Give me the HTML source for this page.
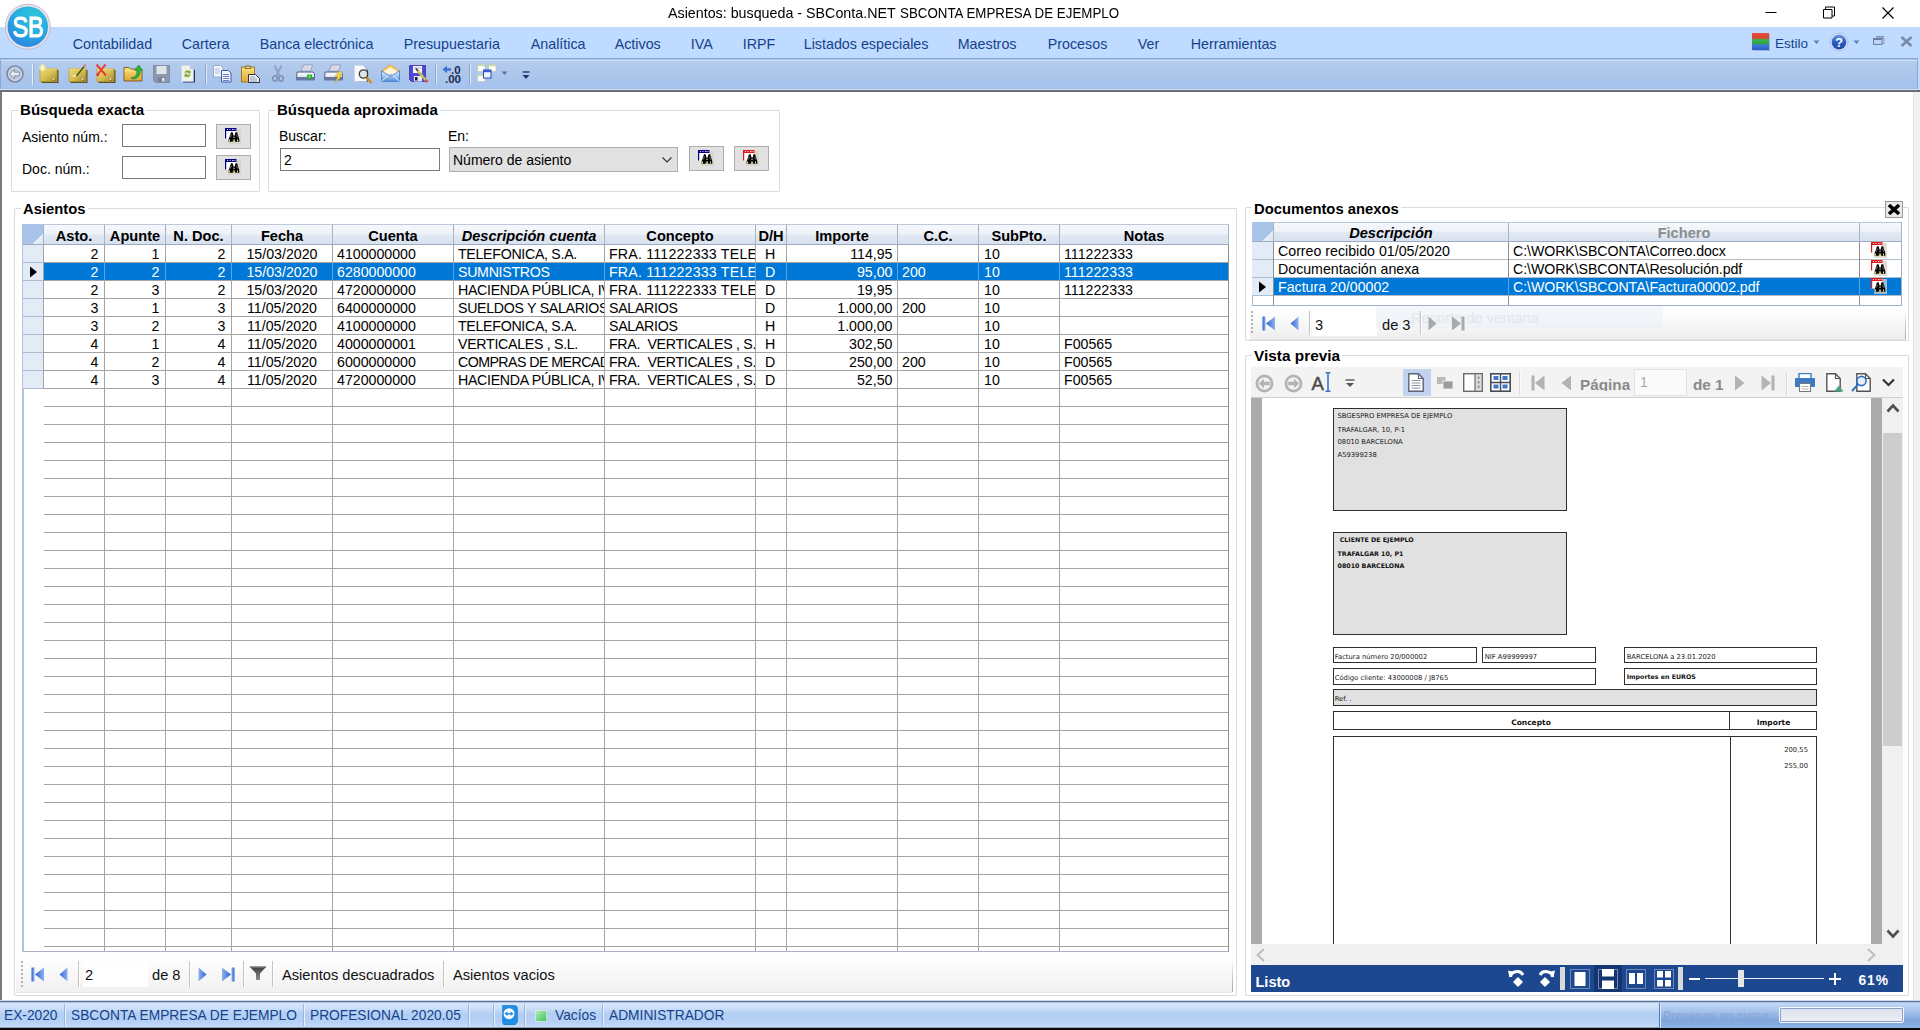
<!DOCTYPE html><html lang="es"><head><meta charset="utf-8"><title>Asientos: busqueda - SBConta.NET</title><style>
*{box-sizing:border-box;margin:0;padding:0}
html,body{width:1920px;height:1030px;overflow:hidden;background:#fff}
body{position:relative;font-family:"Liberation Sans",sans-serif;font-size:14px;color:#000}
.a{position:absolute;white-space:nowrap}
.t{position:absolute;white-space:nowrap;line-height:18px;height:18px}
.b{font-weight:bold}
.mn{color:#15428b;font-size:14.300px;top:35px}
.gb{position:absolute;border:1px solid #dcdcdc;border-radius:1px}
.gt{position:absolute;font-weight:bold;font-size:15px;line-height:18px;background:#fff;padding:0 2px;white-space:nowrap}
.inp{position:absolute;background:#fff;border:1px solid #7a7a7a}
.btn{position:absolute;background:#e1e1e1;border:1px solid #adadad}
.hd{position:absolute;background:linear-gradient(#f5f8fc 0%,#eef2f9 46%,#e1e8f3 54%,#d8e1ef 100%);border-right:1px solid #a7b3c9;border-bottom:1px solid #a0abc0;border-top:1px solid #bcc7da;font-weight:bold;font-size:14.6px;text-align:center;line-height:20px;white-space:nowrap;overflow:hidden}
.c{position:absolute;white-space:nowrap;overflow:hidden;font-size:14.2px;line-height:18px;height:18px;padding:0 4px}
.r{text-align:right;padding-right:5.500px}
.sel{color:#fff}
.st{position:absolute;color:#15428b;font-size:13.75px;line-height:18px;top:1007px;white-space:nowrap}
.nv{position:absolute;font-size:14.67px;line-height:20px;white-space:nowrap;color:#111}
.pv{position:absolute;font-family:"DejaVu Sans","Liberation Sans",sans-serif;font-size:6.8px;line-height:9px;white-space:nowrap;color:#222}
.pv.b{font-size:6.3px;color:#111}
</style></head><body>
<div class="a" style="left:0;top:0;width:1920px;height:27px;background:#fff"></div>
<div class="a" style="left:668px;top:3px;height:20px;font-size:15px;line-height:20px;"><span style="display:inline-block;transform-origin:0 50%;transform:scaleX(.9515)">Asientos: busqueda - SBConta.NET</span></div>
<div class="a" style="left:900px;top:3px;height:20px;font-size:15px;line-height:20px;"><span style="display:inline-block;transform-origin:0 50%;transform:scaleX(.889)">SBCONTA EMPRESA DE EJEMPLO</span></div>
<svg class="a" style="left:1760px;top:0" width="160" height="27" viewBox="0 0 160 27"><g fill="none" stroke="#000" stroke-width="1"><path d="M5.5 12.5h11"/><path d="M63.5 9.5h8.500v8.500h-8.500z"/><path d="M65.5 9.5v-2.500h9v9h-2.500"/><path d="M122.5 7.500l11 11M133.500 7.500l-11 11" stroke-width="1.2"/></g></svg>
<div class="a" style="left:0;top:27px;width:1920px;height:32px;background:#bfdbff"></div>
<div class="t mn" style="left:72.7px">Contabilidad</div>
<div class="t mn" style="left:181.7px">Cartera</div>
<div class="t mn" style="left:259.7px">Banca electrónica</div>
<div class="t mn" style="left:403.7px">Presupuestaria</div>
<div class="t mn" style="left:530.7px">Analítica</div>
<div class="t mn" style="left:614.7px">Activos</div>
<div class="t mn" style="left:690.7px">IVA</div>
<div class="t mn" style="left:742.7px">IRPF</div>
<div class="t mn" style="left:803.7px">Listados especiales</div>
<div class="t mn" style="left:957.7px">Maestros</div>
<div class="t mn" style="left:1047.7px">Procesos</div>
<div class="t mn" style="left:1137.7px">Ver</div>
<div class="t mn" style="left:1190.7px">Herramientas</div>
<div class="t mn" style="left:1775px;top:35px;font-size:13.500px">Estilo</div>
<div class="a" style="left:0;top:58px;width:1920px;height:34px;background:linear-gradient(#bfdbff 0,#86a4d1 .4px,#86a4d1 1.300px,#cfe0f8 1.700px,#cfe0f8 2.500px,#b4cced 2.900px,#adc6ea 16px,#a4c3ee 30px,#8eaad4 30.300px,#d5e3f8 30.900px,#d5e3f8 32.100px,#6b6e78 32.500px,#6b6e78 33.600px,#e6e6e8 34px)"></div>
<div class="a" style="left:1918px;top:58px;width:2px;height:32px;background:#bfdbff"></div>
<div class="a" style="left:1917px;top:60px;width:1px;height:29px;background:#8eaad4"></div><div class="a" style="left:0;top:60px;width:1px;height:29px;background:#8eaad4"></div>
<div class="a" style="left:0;top:92px;width:1920px;height:909px;background:#fff"></div>
<div class="a" style="left:0;top:92px;width:2px;height:909px;background:#787a80"></div>
<div class="a" style="left:1913px;top:92px;width:7px;height:909px;background:#f0f0f0;border-left:1px solid #e2e2e2"></div>
<div class="gb" style="left:11px;top:110px;width:249px;height:82px"></div>
<div class="gt" style="left:18px;top:101px;font-size:15.100px">Búsqueda exacta</div>
<div class="t" style="left:22px;top:128px">Asiento núm.:</div>
<div class="t" style="left:22px;top:160px">Doc. núm.:</div>
<div class="inp" style="left:122px;top:124px;width:84px;height:23px"></div>
<div class="inp" style="left:122px;top:156px;width:84px;height:23px"></div>
<div class="btn" style="left:216px;top:124px;width:35px;height:25px"></div>
<div class="btn" style="left:216px;top:155px;width:35px;height:25px"></div>
<div class="gb" style="left:268px;top:110px;width:512px;height:82px"></div>
<div class="gt" style="left:275px;top:101px">Búsqueda aproximada</div>
<div class="t" style="left:279px;top:127px">Buscar:</div>
<div class="t" style="left:448px;top:127px">En:</div>
<div class="inp" style="left:280px;top:148px;width:160px;height:23px"></div>
<div class="t" style="left:284px;top:151px">2</div>
<div class="btn" style="left:449px;top:147px;width:229px;height:25px"></div>
<div class="t" style="left:453px;top:151px">Número de asiento</div>
<svg class="a" style="left:660px;top:155px" width="14" height="10"><path d="M2.500 2.500l4.500 4.500l4.500-4.500" fill="none" stroke="#333" stroke-width="1.2"/></svg>
<div class="btn" style="left:689px;top:146px;width:35px;height:25px"></div>
<div class="btn" style="left:734px;top:146px;width:35px;height:25px"></div>
<div class="gb" style="left:14px;top:208px;width:1223px;height:788px"></div>
<div class="gt" style="left:21px;top:200px;font-size:14.800px">Asientos</div>
<div class="a" style="left:23px;top:224px;width:1206px;height:728px;background:#fff;border-right:1px solid #8f8f8f;border-bottom:1px solid #aab2c2;overflow:hidden">
<div class="a" style="left:0;top:21px;width:100%;height:707px;background:repeating-linear-gradient(#fff 0,#fff 17px,#a4a4a4 17px,#a4a4a4 18px)"></div>
<div class="a" style="left:0;top:21px;width:21px;height:144px;background:repeating-linear-gradient(#e3ebf7 0,#e3ebf7 17px,#aebdd6 17px,#aebdd6 18px);border-right:1px solid #aebdd6"></div>
<div class="a" style="left:20px;top:21px;width:1px;height:707px;background:#a4a4a4"></div>
<div class="a" style="left:81px;top:21px;width:1px;height:707px;background:#a4a4a4"></div>
<div class="a" style="left:142px;top:21px;width:1px;height:707px;background:#a4a4a4"></div>
<div class="a" style="left:208px;top:21px;width:1px;height:707px;background:#a4a4a4"></div>
<div class="a" style="left:309px;top:21px;width:1px;height:707px;background:#a4a4a4"></div>
<div class="a" style="left:430px;top:21px;width:1px;height:707px;background:#a4a4a4"></div>
<div class="a" style="left:581px;top:21px;width:1px;height:707px;background:#a4a4a4"></div>
<div class="a" style="left:732px;top:21px;width:1px;height:707px;background:#a4a4a4"></div>
<div class="a" style="left:763px;top:21px;width:1px;height:707px;background:#a4a4a4"></div>
<div class="a" style="left:874px;top:21px;width:1px;height:707px;background:#a4a4a4"></div>
<div class="a" style="left:955px;top:21px;width:1px;height:707px;background:#a4a4a4"></div>
<div class="a" style="left:1036px;top:21px;width:1px;height:707px;background:#a4a4a4"></div>
<div class="a" style="left:0;top:165px;width:21px;height:563px;background:#fff;border-left:1px solid #b5c4dc"></div>
<div class="a" style="left:21px;top:39px;width:1185px;height:17px;background:#0078d7"></div>
<div class="a" style="left:81px;top:39px;width:1px;height:17px;background:#56a6ea"></div>
<div class="a" style="left:142px;top:39px;width:1px;height:17px;background:#56a6ea"></div>
<div class="a" style="left:208px;top:39px;width:1px;height:17px;background:#56a6ea"></div>
<div class="a" style="left:309px;top:39px;width:1px;height:17px;background:#56a6ea"></div>
<div class="a" style="left:430px;top:39px;width:1px;height:17px;background:#56a6ea"></div>
<div class="a" style="left:581px;top:39px;width:1px;height:17px;background:#56a6ea"></div>
<div class="a" style="left:732px;top:39px;width:1px;height:17px;background:#56a6ea"></div>
<div class="a" style="left:763px;top:39px;width:1px;height:17px;background:#56a6ea"></div>
<div class="a" style="left:874px;top:39px;width:1px;height:17px;background:#56a6ea"></div>
<div class="a" style="left:955px;top:39px;width:1px;height:17px;background:#56a6ea"></div>
<div class="a" style="left:1036px;top:39px;width:1px;height:17px;background:#56a6ea"></div>
</div>
<div class="a" style="left:22px;top:224px;width:1px;height:728px;background:#b5c4dc"></div>
<div class="hd" style="left:23px;top:224px;width:21px;height:21px;background:linear-gradient(135deg,#a9c4e9 0,#a9c4e9 72%,#e8eef8 73%,#dbe5f3 100%);border-top:1px solid #a9c4e9"></div>
<div class="hd" style="left:44px;top:224px;width:61px;height:21px;line-height:22px;">Asto.</div>
<div class="hd" style="left:105px;top:224px;width:61px;height:21px;line-height:22px;">Apunte</div>
<div class="hd" style="left:166px;top:224px;width:66px;height:21px;line-height:22px;">N. Doc.</div>
<div class="hd" style="left:232px;top:224px;width:101px;height:21px;line-height:22px;">Fecha</div>
<div class="hd" style="left:333px;top:224px;width:121px;height:21px;line-height:22px;">Cuenta</div>
<div class="hd" style="left:454px;top:224px;width:151px;height:21px;line-height:22px;font-style:italic;">Descripción cuenta</div>
<div class="hd" style="left:605px;top:224px;width:151px;height:21px;line-height:22px;">Concepto</div>
<div class="hd" style="left:756px;top:224px;width:31px;height:21px;line-height:22px;">D/H</div>
<div class="hd" style="left:787px;top:224px;width:111px;height:21px;line-height:22px;">Importe</div>
<div class="hd" style="left:898px;top:224px;width:81px;height:21px;line-height:22px;">C.C.</div>
<div class="hd" style="left:979px;top:224px;width:81px;height:21px;line-height:22px;">SubPto.</div>
<div class="hd" style="left:1060px;top:224px;width:169px;height:21px;line-height:22px;">Notas</div>
<div class="c r" style="left:44px;top:245px;width:60px;white-space:pre">2</div>
<div class="c r" style="left:105px;top:245px;width:60px;white-space:pre">1</div>
<div class="c r" style="left:166px;top:245px;width:65px;white-space:pre">2</div>
<div class="c" style="left:232px;top:245px;width:100px;text-align:center;white-space:pre">15/03/2020</div>
<div class="c" style="left:333px;top:245px;width:120px;white-space:pre">4100000000</div>
<div class="c" style="left:454px;top:245px;width:150px;letter-spacing:-.3px;white-space:pre">TELEFONICA, S.A.</div>
<div class="c" style="left:605px;top:245px;width:150px;letter-spacing:.2px;white-space:pre">FRA. 111222333 TELEFONICA</div>
<div class="c" style="left:756px;top:245px;width:30px;padding-left:9px;white-space:pre">H</div>
<div class="c r" style="left:787px;top:245px;width:110px;padding-right:4.500px;white-space:pre">114,95</div>
<div class="c" style="left:979px;top:245px;width:80px;padding-left:5px;white-space:pre">10</div>
<div class="c" style="left:1060px;top:245px;width:168px;white-space:pre">111222333</div>
<div class="c sel r" style="left:44px;top:263px;width:60px;white-space:pre">2</div>
<div class="c sel r" style="left:105px;top:263px;width:60px;white-space:pre">2</div>
<div class="c sel r" style="left:166px;top:263px;width:65px;white-space:pre">2</div>
<div class="c sel" style="left:232px;top:263px;width:100px;text-align:center;white-space:pre">15/03/2020</div>
<div class="c sel" style="left:333px;top:263px;width:120px;white-space:pre">6280000000</div>
<div class="c sel" style="left:454px;top:263px;width:150px;letter-spacing:-.3px;white-space:pre">SUMNISTROS</div>
<div class="c sel" style="left:605px;top:263px;width:150px;letter-spacing:.2px;white-space:pre">FRA. 111222333 TELEFONICA</div>
<div class="c sel" style="left:756px;top:263px;width:30px;padding-left:9px;white-space:pre">D</div>
<div class="c sel r" style="left:787px;top:263px;width:110px;padding-right:4.500px;white-space:pre">95,00</div>
<div class="c sel" style="left:898px;top:263px;width:80px;padding-left:4px;white-space:pre">200</div>
<div class="c sel" style="left:979px;top:263px;width:80px;padding-left:5px;white-space:pre">10</div>
<div class="c sel" style="left:1060px;top:263px;width:168px;white-space:pre">111222333</div>
<div class="c r" style="left:44px;top:281px;width:60px;white-space:pre">2</div>
<div class="c r" style="left:105px;top:281px;width:60px;white-space:pre">3</div>
<div class="c r" style="left:166px;top:281px;width:65px;white-space:pre">2</div>
<div class="c" style="left:232px;top:281px;width:100px;text-align:center;white-space:pre">15/03/2020</div>
<div class="c" style="left:333px;top:281px;width:120px;white-space:pre">4720000000</div>
<div class="c" style="left:454px;top:281px;width:150px;letter-spacing:-.3px;white-space:pre">HACIENDA PÚBLICA, IVA SOPORTADO</div>
<div class="c" style="left:605px;top:281px;width:150px;letter-spacing:.2px;white-space:pre">FRA. 111222333 TELEFONICA</div>
<div class="c" style="left:756px;top:281px;width:30px;padding-left:9px;white-space:pre">D</div>
<div class="c r" style="left:787px;top:281px;width:110px;padding-right:4.500px;white-space:pre">19,95</div>
<div class="c" style="left:979px;top:281px;width:80px;padding-left:5px;white-space:pre">10</div>
<div class="c" style="left:1060px;top:281px;width:168px;white-space:pre">111222333</div>
<div class="c r" style="left:44px;top:299px;width:60px;white-space:pre">3</div>
<div class="c r" style="left:105px;top:299px;width:60px;white-space:pre">1</div>
<div class="c r" style="left:166px;top:299px;width:65px;white-space:pre">3</div>
<div class="c" style="left:232px;top:299px;width:100px;text-align:center;white-space:pre">11/05/2020</div>
<div class="c" style="left:333px;top:299px;width:120px;white-space:pre">6400000000</div>
<div class="c" style="left:454px;top:299px;width:150px;letter-spacing:-.3px;white-space:pre">SUELDOS Y SALARIOS</div>
<div class="c" style="left:605px;top:299px;width:150px;letter-spacing:-.3px;white-space:pre">SALARIOS</div>
<div class="c" style="left:756px;top:299px;width:30px;padding-left:9px;white-space:pre">D</div>
<div class="c r" style="left:787px;top:299px;width:110px;padding-right:4.500px;white-space:pre">1.000,00</div>
<div class="c" style="left:898px;top:299px;width:80px;padding-left:4px;white-space:pre">200</div>
<div class="c" style="left:979px;top:299px;width:80px;padding-left:5px;white-space:pre">10</div>
<div class="c r" style="left:44px;top:317px;width:60px;white-space:pre">3</div>
<div class="c r" style="left:105px;top:317px;width:60px;white-space:pre">2</div>
<div class="c r" style="left:166px;top:317px;width:65px;white-space:pre">3</div>
<div class="c" style="left:232px;top:317px;width:100px;text-align:center;white-space:pre">11/05/2020</div>
<div class="c" style="left:333px;top:317px;width:120px;white-space:pre">4100000000</div>
<div class="c" style="left:454px;top:317px;width:150px;letter-spacing:-.3px;white-space:pre">TELEFONICA, S.A.</div>
<div class="c" style="left:605px;top:317px;width:150px;letter-spacing:-.3px;white-space:pre">SALARIOS</div>
<div class="c" style="left:756px;top:317px;width:30px;padding-left:9px;white-space:pre">H</div>
<div class="c r" style="left:787px;top:317px;width:110px;padding-right:4.500px;white-space:pre">1.000,00</div>
<div class="c" style="left:979px;top:317px;width:80px;padding-left:5px;white-space:pre">10</div>
<div class="c r" style="left:44px;top:335px;width:60px;white-space:pre">4</div>
<div class="c r" style="left:105px;top:335px;width:60px;white-space:pre">1</div>
<div class="c r" style="left:166px;top:335px;width:65px;white-space:pre">4</div>
<div class="c" style="left:232px;top:335px;width:100px;text-align:center;white-space:pre">11/05/2020</div>
<div class="c" style="left:333px;top:335px;width:120px;white-space:pre">4000000001</div>
<div class="c" style="left:454px;top:335px;width:150px;letter-spacing:-.3px;white-space:pre">VERTICALES , S.L.</div>
<div class="c" style="left:605px;top:335px;width:150px;letter-spacing:-.3px;white-space:pre">FRA.  VERTICALES , S.L.</div>
<div class="c" style="left:756px;top:335px;width:30px;padding-left:9px;white-space:pre">H</div>
<div class="c r" style="left:787px;top:335px;width:110px;padding-right:4.500px;white-space:pre">302,50</div>
<div class="c" style="left:979px;top:335px;width:80px;padding-left:5px;white-space:pre">10</div>
<div class="c" style="left:1060px;top:335px;width:168px;white-space:pre">F00565</div>
<div class="c r" style="left:44px;top:353px;width:60px;white-space:pre">4</div>
<div class="c r" style="left:105px;top:353px;width:60px;white-space:pre">2</div>
<div class="c r" style="left:166px;top:353px;width:65px;white-space:pre">4</div>
<div class="c" style="left:232px;top:353px;width:100px;text-align:center;white-space:pre">11/05/2020</div>
<div class="c" style="left:333px;top:353px;width:120px;white-space:pre">6000000000</div>
<div class="c" style="left:454px;top:353px;width:150px;letter-spacing:-.55px;white-space:pre">COMPRAS DE MERCADERIAS</div>
<div class="c" style="left:605px;top:353px;width:150px;letter-spacing:-.3px;white-space:pre">FRA.  VERTICALES , S.L.</div>
<div class="c" style="left:756px;top:353px;width:30px;padding-left:9px;white-space:pre">D</div>
<div class="c r" style="left:787px;top:353px;width:110px;padding-right:4.500px;white-space:pre">250,00</div>
<div class="c" style="left:898px;top:353px;width:80px;padding-left:4px;white-space:pre">200</div>
<div class="c" style="left:979px;top:353px;width:80px;padding-left:5px;white-space:pre">10</div>
<div class="c" style="left:1060px;top:353px;width:168px;white-space:pre">F00565</div>
<div class="c r" style="left:44px;top:371px;width:60px;white-space:pre">4</div>
<div class="c r" style="left:105px;top:371px;width:60px;white-space:pre">3</div>
<div class="c r" style="left:166px;top:371px;width:65px;white-space:pre">4</div>
<div class="c" style="left:232px;top:371px;width:100px;text-align:center;white-space:pre">11/05/2020</div>
<div class="c" style="left:333px;top:371px;width:120px;white-space:pre">4720000000</div>
<div class="c" style="left:454px;top:371px;width:150px;letter-spacing:-.3px;white-space:pre">HACIENDA PÚBLICA, IVA SOPORTADO</div>
<div class="c" style="left:605px;top:371px;width:150px;letter-spacing:-.3px;white-space:pre">FRA.  VERTICALES , S.L.</div>
<div class="c" style="left:756px;top:371px;width:30px;padding-left:9px;white-space:pre">D</div>
<div class="c r" style="left:787px;top:371px;width:110px;padding-right:4.500px;white-space:pre">52,50</div>
<div class="c" style="left:979px;top:371px;width:80px;padding-left:5px;white-space:pre">10</div>
<div class="c" style="left:1060px;top:371px;width:168px;white-space:pre">F00565</div>
<svg class="a" style="left:29px;top:266px" width="9" height="12"><path d="M1 0.500l7 5.500l-7 5.500z" fill="#000"/></svg>
<div class="a" style="left:16px;top:955px;width:1217px;height:38px;background:linear-gradient(#ffffff,#fafafa 40%,#f0f0f0);border-bottom:1px solid #e6e6e6;border-radius:0 0 3px 0"></div><div class="a" style="left:1232px;top:960px;width:1px;height:32px;background:linear-gradient(rgba(190,190,190,0),#c4c4c4 60%,#a8a8a8)"></div>
<div class="inp" style="left:83px;top:962px;width:65px;height:25px;border:0"></div>
<div class="nv" style="left:85px;top:965px">2</div>
<div class="nv" style="left:152px;top:965px">de 8</div>
<div class="nv" style="left:282px;top:965px">Asientos descuadrados</div>
<div class="nv" style="left:453px;top:965px">Asientos vacios</div>
<div class="a" style="left:0;top:1000px;width:1920px;height:1px;background:#cfd8e8"></div>
<div class="a" style="left:0;top:1001px;width:1920px;height:29px;background:linear-gradient(#4a5f86 0,#6f8cba 1.200px,#dbe8fa 1.700px,#cbdff9 7px,#b2cef3 13px,#b6d1f5 21px,#c6dcf8 26px,#56627a 27px,#0a0a0a 27.5px,#000 29px)"></div>
<div class="a" style="left:1659px;top:1002.500px;width:261px;height:25.500px;background:linear-gradient(#c3d9f7 0,#9dbde9 40%,#7fa6dd 70%,#8fb3e5 100%);border-left:1px solid #5f7aa8;box-shadow:1px 0 0 #dbe8fa inset"></div>
<div class="a" style="left:1779px;top:1007px;width:125px;height:16px;background:linear-gradient(#dde2ec,#eceef4);border:1px solid #f4f8ff;border-radius:2px;box-shadow:0 0 0 1px #8a9fc8 inset"></div>
<div class="st" style="left:4px">EX-2020</div>
<div class="st" style="left:71px">SBCONTA EMPRESA DE EJEMPLO</div>
<div class="st" style="left:310px">PROFESIONAL 2020.05</div>
<div class="st" style="left:555px">Vacíos</div>
<div class="st" style="left:609px">ADMINISTRADOR</div>
<div class="st" style="left:1663px;color:#86a4d6;opacity:.75;font-weight:bold;font-size:12.200px;letter-spacing:-.2px;filter:blur(.6px)">Procesos en curso:</div>
<div class="gb" style="left:1245px;top:207px;width:664px;height:134px"></div>
<div class="gt" style="left:1252px;top:200px;font-size:14.800px">Documentos anexos</div>
<div class="a" style="left:1885px;top:201px;width:18px;height:17px;background:#e9e9e9;border:1px solid #9a9a9a"></div>
<svg class="a" style="left:1888px;top:204px" width="12" height="11" viewBox="0 0 12 11"><path d="M1 1l10 9M11 1l-10 9" stroke="#000" stroke-width="3.400" fill="none"/></svg>
<div class="a" style="left:1252px;top:222px;width:650px;height:84px;background:#fff;border-right:1px solid #9eb0cb;border-bottom:1px solid #9eb0cb;overflow:hidden">
<div class="a" style="left:0;top:20px;width:100%;height:54px;background:repeating-linear-gradient(#fff 0,#fff 17px,#b4bcc8 17px,#b4bcc8 18px)"></div>
<div class="a" style="left:0;top:20px;width:22px;height:54px;background:repeating-linear-gradient(#e3ebf7 0,#e3ebf7 17px,#aebdd6 17px,#aebdd6 18px);border-right:1px solid #aebdd6"></div>
<div class="a" style="left:0;top:74px;width:1px;height:20px;background:#aebdd6"></div>
<div class="a" style="left:21px;top:20px;width:1px;height:90px;background:#8f8f8f"></div>
<div class="a" style="left:256px;top:20px;width:1px;height:90px;background:#8f8f8f"></div>
<div class="a" style="left:607px;top:20px;width:1px;height:90px;background:#8f8f8f"></div>
<div class="a" style="left:22px;top:56px;width:628px;height:17px;background:#0078d7"></div>
<div class="a" style="left:256px;top:56px;width:1px;height:17px;background:#56a6ea"></div>
<div class="a" style="left:607px;top:56px;width:1px;height:17px;background:#56a6ea"></div>
</div>
<div class="hd" style="left:1252px;top:222px;width:22px;height:20px;background:linear-gradient(135deg,#a9c4e9 0,#a9c4e9 72%,#e8eef8 73%,#dbe5f3 100%);border-top:1px solid #a9c4e9"></div>
<div class="hd" style="left:1274px;top:222px;width:235px;height:20px;font-style:italic;">Descripción</div>
<div class="hd" style="left:1509px;top:222px;width:351px;height:20px;color:#8c8c8c;">Fichero</div>
<div class="hd" style="left:1860px;top:222px;width:42px;height:20px;"></div>
<div class="c" style="left:1274px;top:242px;width:234px">Correo recibido 01/05/2020</div>
<div class="c" style="left:1509px;top:242px;width:350px;letter-spacing:-.08px">C:\WORK\SBCONTA\Correo.docx</div>
<div class="c" style="left:1274px;top:260px;width:234px">Documentación anexa</div>
<div class="c" style="left:1509px;top:260px;width:350px;letter-spacing:-.08px">C:\WORK\SBCONTA\Resolución.pdf</div>
<div class="c sel" style="left:1274px;top:278px;width:234px">Factura 20/00002</div>
<div class="c sel" style="left:1509px;top:278px;width:350px;letter-spacing:-.08px">C:\WORK\SBCONTA\Factura00002.pdf</div>
<svg class="a" style="left:1258px;top:281px" width="9" height="12"><path d="M1 0.500l7 5.500l-7 5.500z" fill="#000"/></svg>
<div class="a" style="left:1250px;top:306px;width:656px;height:34px;background:linear-gradient(#ffffff,#fafafa 40%,#eeeeee);border-bottom:1px solid #e2e2e2"></div><div class="a" style="left:1905px;top:311px;width:1px;height:28px;background:linear-gradient(rgba(190,190,190,0),#c4c4c4 60%,#a8a8a8)"></div>
<div class="a" style="left:1312px;top:311px;width:65px;height:25px;background:#fff"></div>
<div class="a" style="left:1376px;top:306px;width:287px;height:22px;background:rgba(232,237,247,.5)"></div>
<div class="nv" style="left:1411px;top:308px;color:#e3e6ec">Recorte de ventana</div>
<div class="nv" style="left:1315px;top:315px">3</div>
<div class="nv" style="left:1382px;top:315px">de 3</div>
<div class="gb" style="left:1245px;top:355px;width:664px;height:641px"></div>
<div class="gt" style="left:1252px;top:347px;font-size:15.400px">Vista previa</div>
<div class="a" style="left:1251px;top:367px;width:652px;height:31px;background:#f3f3f3;border-bottom:1px solid #cfcfcf"></div>
<div class="a" style="left:1403px;top:369px;width:28px;height:27px;background:#c2d3ef"></div>
<div class="a" style="left:1634px;top:369px;width:53px;height:27px;background:#fafafa;border:1px solid #e3e3e3"></div>
<div class="a" style="left:1580px;top:375px;font-size:15.300px;line-height:20px;height:16px;overflow:hidden;color:#8a8a8a;font-weight:bold">Página</div>
<div class="a" style="left:1640px;top:372px;font-size:14px;line-height:20px;color:#a8a8a8">1</div>
<div class="a" style="left:1693px;top:375px;font-size:15.300px;line-height:20px;color:#8a8a8a;font-weight:bold">de 1</div>
<div class="a" style="left:1251px;top:398px;width:631px;height:546px;background:#ababab"></div>
<div class="a" style="left:1262px;top:398px;width:609px;height:546px;background:#fff"></div>
<div class="a" style="left:1882px;top:398px;width:21px;height:546px;background:#f0f0f0"></div>
<div class="a" style="left:1883px;top:433px;width:19px;height:313px;background:#cdcdcd"></div>
<svg class="a" style="left:1885px;top:401px" width="16" height="12"><path d="M2.500 10.500l5.500-6l5.500 6" fill="none" stroke="#505050" stroke-width="2.600"/></svg>
<svg class="a" style="left:1885px;top:929px" width="16" height="12"><path d="M2.500 1.500l5.500 6l5.500-6" fill="none" stroke="#505050" stroke-width="2.600"/></svg>
<div class="a" style="left:1251px;top:944px;width:652px;height:21px;background:#f0f0f0"></div>
<svg class="a" style="left:1254px;top:947px" width="12" height="16"><path d="M10 2l-6.500 6l6.500 6" fill="none" stroke="#bdbdbd" stroke-width="2"/></svg>
<svg class="a" style="left:1866px;top:947px" width="12" height="16"><path d="M2 2l6.500 6l-6.500 6" fill="none" stroke="#bdbdbd" stroke-width="2"/></svg>
<div class="a" style="left:1251px;top:965px;width:652px;height:27px;background:#1d4890"></div>
<div class="a b" style="left:1255.500px;top:971.500px;font-size:14.500px;line-height:20px;color:#fff">Listo</div>
<div class="a b" style="left:1858.500px;top:970.800px;font-size:13.800px;letter-spacing:.9px;line-height:20px;color:#fff">61%</div>
<div class="a" style="left:1333px;top:408px;width:234px;height:103px;background:#e1e1e1;border:1px solid #2e2e2e"></div>
<div class="pv" style="left:1337.5px;top:412.3px">SBGESPRO EMPRESA DE EJEMPLO</div>
<div class="pv" style="left:1337.5px;top:425.7px">TRAFALGAR, 10, P-1</div>
<div class="pv" style="left:1337.5px;top:437.9px">08010 BARCELONA</div>
<div class="pv" style="left:1337.5px;top:451.3px">A59399238</div>
<div class="a" style="left:1333px;top:532px;width:234px;height:103px;background:#e1e1e1;border:1px solid #2e2e2e"></div>
<div class="pv b" style="left:1337.5px;top:535.1px;white-space:pre"> CLIENTE DE EJEMPLO</div>
<div class="pv b" style="left:1337.5px;top:548.9px;white-space:pre">TRAFALGAR 10, P1</div>
<div class="pv b" style="left:1337.5px;top:560.7px;white-space:pre">08010 BARCELONA</div>
<div class="a" style="left:1333px;top:647px;width:144px;height:16px;background:#fff;border:1px solid #2e2e2e"></div>
<div class="pv" style="left:1334.7px;top:652.5px">Factura número 20/000002</div>
<div class="a" style="left:1482px;top:647px;width:114px;height:16px;background:#fff;border:1px solid #2e2e2e"></div>
<div class="pv" style="left:1484.7px;top:652.5px">NIF A99999997</div>
<div class="a" style="left:1624px;top:647px;width:193px;height:16px;background:#fff;border:1px solid #2e2e2e"></div>
<div class="pv" style="left:1626.7px;top:652.5px">BARCELONA a 23.01.2020</div>
<div class="a" style="left:1333px;top:668px;width:263px;height:17px;background:#fff;border:1px solid #2e2e2e"></div>
<div class="pv" style="left:1334.7px;top:673.5px">Código cliente: 43000008 / J8765</div>
<div class="a" style="left:1624px;top:668px;width:193px;height:17px;background:#fff;border:1px solid #2e2e2e"></div>
<div class="pv b" style="left:1626.7px;top:672.3px">Importes en EUROS</div>
<div class="a" style="left:1333px;top:689px;width:484px;height:17px;background:#e1e1e1;border:1px solid #2e2e2e"></div>
<div class="pv" style="left:1334.7px;top:694.7px">Ref. .</div>
<div class="a" style="left:1333px;top:711px;width:484px;height:19px;background:#fff;border:1px solid #2e2e2e"></div>
<div class="a" style="left:1729px;top:711px;width:1px;height:19px;background:#333"></div>
<div class="pv b" style="left:1332px;top:717.5px;width:398px;text-align:center;font-size:7.500px">Concepto</div>
<div class="pv b" style="left:1730px;top:717.5px;width:87px;text-align:center;font-size:7.500px">Importe</div>
<div class="a" style="left:1333px;top:736px;width:484px;height:208px;border:1px solid #2e2e2e;border-bottom:0"></div>
<div class="a" style="left:1730px;top:736px;width:1px;height:208px;background:#333"></div>
<div class="pv" style="left:1740px;top:745.5px;width:68px;text-align:right">200,55</div>
<div class="pv" style="left:1740px;top:761.5px;width:68px;text-align:right">255,00</div>
<svg width="0" height="0" style="position:absolute"><defs>
<linearGradient id="gFold" x1="0" y1="0" x2="1" y2="1"><stop offset="0" stop-color="#eddb7e"/><stop offset=".5" stop-color="#d8bf54"/><stop offset="1" stop-color="#a0862a"/></linearGradient>
<linearGradient id="gFoldO" x1="0" y1="0" x2="0" y2="1"><stop offset="0" stop-color="#fbe27a"/><stop offset="1" stop-color="#e2a43a"/></linearGradient>
<linearGradient id="gNav" x1="0" y1="0" x2="1" y2="0"><stop offset="0" stop-color="#2f63d3"/><stop offset="1" stop-color="#8fb2ee"/></linearGradient>
<linearGradient id="gNavR" x1="1" y1="0" x2="0" y2="0"><stop offset="0" stop-color="#2f63d3"/><stop offset="1" stop-color="#8fb2ee"/></linearGradient>
<radialGradient id="gLogo" cx=".65" cy=".2" r="1"><stop offset="0" stop-color="#2cc4d8"/><stop offset=".45" stop-color="#28aee0"/><stop offset="1" stop-color="#2b74e0"/></radialGradient>
<linearGradient id="gHelp" x1="0" y1="0" x2="0" y2="1"><stop offset="0" stop-color="#6f9ae6"/><stop offset=".5" stop-color="#2b5fc4"/><stop offset="1" stop-color="#1c49a6"/></linearGradient>
<linearGradient id="gEst" x1="0" y1="0" x2="0" y2="1"><stop offset="0" stop-color="#ee4a3a"/><stop offset=".30" stop-color="#d6452f"/><stop offset=".40" stop-color="#3bb34a"/><stop offset=".62" stop-color="#2fa24a"/><stop offset=".72" stop-color="#3f79dd"/><stop offset="1" stop-color="#2b5ac8"/></linearGradient>
<linearGradient id="gFun" x1="0" y1="0" x2="0" y2="1"><stop offset="0" stop-color="#3c3c3c"/><stop offset="1" stop-color="#8c8c8c"/></linearGradient>
<linearGradient id="gEnv" x1="0" y1="0" x2="0" y2="1"><stop offset="0" stop-color="#f2f7ff"/><stop offset="1" stop-color="#4f8fdc"/></linearGradient>
<linearGradient id="gGreen" x1="0" y1="0" x2="1" y2="1"><stop offset="0" stop-color="#b8f0b8"/><stop offset="1" stop-color="#3fbf5a"/></linearGradient>
</defs></svg>
<svg class="a" style="left:4px;top:3px;" width="50" height="50" viewBox="0 0 50 50"><circle cx="23.800" cy="23.700" r="22.500" fill="#e6e0ea" stroke="#b9b3c4" stroke-width=".8"/><circle cx="23.800" cy="23.700" r="20.200" fill="url(#gLogo)"/></svg>
<div class="a" style="left:8px;top:10px;width:40px;height:34px;font-size:29.500px;line-height:34px;color:#fff;letter-spacing:-.5px;text-align:center;transform:scaleX(.81);-webkit-text-stroke:1.100px #fff">SB</div>
<svg class="a" style="left:1752px;top:33px;" width="18" height="18" viewBox="0 0 18 18"><rect x="1" y="1" width="17" height="17" fill="#7a8fb4" opacity=".5"/><rect x="0" y="0" width="17" height="17" fill="url(#gEst)"/></svg>
<svg class="a" style="left:1813px;top:40px;" width="8" height="5" viewBox="0 0 8 5"><path d="M0.500 0.500h6l-3 3.500z" fill="#5f7fb0"/></svg>
<svg class="a" style="left:1829px;top:32px;" width="20" height="20" viewBox="0 0 20 20"><circle cx="10" cy="10" r="9" fill="#dfe9fb" stroke="#9fb5dc" stroke-width=".8"/><circle cx="10" cy="10" r="7.400" fill="url(#gHelp)"/><text x="10" y="14.500" text-anchor="middle" font-family="Liberation Sans,sans-serif" font-weight="bold" font-size="12.500" fill="#fff">?</text></svg>
<svg class="a" style="left:1853px;top:40px;" width="8" height="5" viewBox="0 0 8 5"><path d="M0.500 0.500h6l-3 3.500z" fill="#5f7fb0"/></svg>
<svg class="a" style="left:1873px;top:36px;" width="12" height="9" viewBox="0 0 12 9"><path d="M3 2.500h8v5h-1.500" fill="none" stroke="#7f93b6" stroke-width="1"/><rect x="0.500" y="2.500" width="8.500" height="6" fill="#bfd3f2" stroke="#6c80a6" stroke-width="1"/><rect x="0.500" y="2" width="8.500" height="2" fill="#6c80a6"/><path d="M3 0.800h8" stroke="#7f93b6" stroke-width="1.600"/></svg>
<svg class="a" style="left:1900px;top:36px;" width="13" height="11" viewBox="0 0 13 11"><path d="M1.500 1l10 9M11.500 1l-10 9" stroke="#7a8aa6" stroke-width="2.600" fill="none"/></svg>
<svg class="a" style="left:6px;top:65px;" width="18" height="18" viewBox="0 0 18 18"><circle cx="9" cy="9" r="8" fill="#b9c5da" stroke="#7d8aa3" stroke-width="1.600"/><circle cx="9" cy="9" r="6.300" fill="none" stroke="#d5deec" stroke-width=".9"/><path d="M3.500 9l5-4.500v2.700h5v3.600h-5v2.700z" fill="#e6ecf6" stroke="#7f8ca4" stroke-width=".9"/></svg>
<div class="a" style="left:32px;top:64px;width:1px;height:21px;background:#e8f0fc"></div><div class="a" style="left:33px;top:64px;width:1px;height:21px;background:#9db3d8"></div>
<svg class="a" style="left:39px;top:64px;" width="20" height="20" viewBox="0 0 20 20"><path d="M2.500 19h17v-13h-17z" fill="#5e5220"/><path d="M1 4.500h17v13h-17z" fill="url(#gFold)" stroke="#b39c3c" stroke-width=".7"/><path d="M1.500 5h16" stroke="#f7efb0" stroke-width=".8" opacity=".8"/><circle cx="14.800" cy="15.200" r=".9" fill="#fff" opacity=".85"/><circle cx="15.600" cy="16" r=".7" fill="#4a4018" opacity=".7"/><g stroke="#fbf3a0" stroke-width="1.300"><path d="M3.500 0v7.500M0 3.800h7M1.200 1.400l4.600 4.600M5.800 1.400l-4.600 4.600"/></g><circle cx="3.500" cy="3.800" r="1.600" fill="#fffbd0"/></svg>
<svg class="a" style="left:68px;top:64px;" width="20" height="20" viewBox="0 0 20 20"><path d="M2.500 19h17v-13h-17z" fill="#5e5220"/><path d="M1 4.500h17v13h-17z" fill="url(#gFold)" stroke="#b39c3c" stroke-width=".7"/><path d="M1.500 5h16" stroke="#f7efb0" stroke-width=".8" opacity=".8"/><circle cx="14.800" cy="15.200" r=".9" fill="#fff" opacity=".85"/><circle cx="15.600" cy="16" r=".7" fill="#4a4018" opacity=".7"/><path d="M5 11.800l3.500-.3" stroke="#fff" stroke-width="1.200"/><path d="M8.500 12l8-10" stroke="#4a5a1a" stroke-width="1.600"/><path d="M15.700 2.800l2-2.400" stroke="#d88a90" stroke-width="2.200"/></svg>
<svg class="a" style="left:96px;top:64px;" width="20" height="20" viewBox="0 0 20 20"><path d="M2.500 19h17v-13h-17z" fill="#5e5220"/><path d="M1 4.500h17v13h-17z" fill="url(#gFold)" stroke="#b39c3c" stroke-width=".7"/><path d="M1.500 5h16" stroke="#f7efb0" stroke-width=".8" opacity=".8"/><circle cx="14.800" cy="15.200" r=".9" fill="#fff" opacity=".85"/><circle cx="15.600" cy="16" r=".7" fill="#4a4018" opacity=".7"/><path d="M0.500 0.500l9.500 11M9.500 0.500l-7.500 9.500" stroke="#ee3a30" stroke-width="2"/><circle cx="1.800" cy="10.600" r="1.500" fill="#ee2a3a"/></svg>
<svg class="a" style="left:123px;top:64px;" width="20" height="19" viewBox="0 0 20 19"><path d="M1 3.500h5l1.500 1.500h6v2h5.500v10h-18z" fill="url(#gFoldO)" stroke="#6b4a10" stroke-width=".8"/><path d="M1 7h18" stroke="#fff3b0" stroke-width=".8" opacity=".7"/><path d="M8.500 13.500c4 0 5.500-3 5.500-7h-2.600l4.300-5.500l4.300 5.500h-2.600c0 6-3.500 9-8.900 8.500z" fill="#2fb23a" stroke="#1c7a24" stroke-width=".5"/></svg>
<svg class="a" style="left:153px;top:65px;" width="17" height="18" viewBox="0 0 17 18"><path d="M0.500 0.500h16v17h-14l-2-2z" fill="#8d98ac" stroke="#79859c" stroke-width=".8"/><rect x="3.500" y="1" width="10" height="8" fill="#dfe3ea"/><rect x="4.500" y="12" width="8" height="5.500" fill="#79859c"/><rect x="9" y="13" width="2.500" height="3.500" fill="#dfe3ea"/></svg>
<svg class="a" style="left:181px;top:65px;" width="15" height="18" viewBox="0 0 15 18"><path d="M2 2.500h9l3 3v12h-12z" fill="#1f2f6a"/><path d="M0.500 0.500h8.500l3.500 3.500v12.500h-12z" fill="#eef3ec" stroke="#c8d0d8" stroke-width=".5"/><path d="M9 0.500v3.500h3.500z" fill="#b8c4d8"/><path d="M3.500 8a3 3 0 0 1 5-2l1-1v3.500h-3.500l1-1a1.800 1.800 0 0 0-2.500 1z M9.500 9.500a3 3 0 0 1-5 2l-1 1v-3.500h3.500l-1 1a1.800 1.800 0 0 0 2.500-1z" fill="#8aa83a"/></svg>
<div class="a" style="left:205px;top:64px;width:1px;height:21px;background:#8fa6cf"></div><div class="a" style="left:206px;top:64px;width:1px;height:21px;background:#dce8fa"></div>
<svg class="a" style="left:213px;top:65px;" width="19" height="18" viewBox="0 0 19 18"><path d="M0.500 0.500h7l2.500 2.500v9h-9.500z" fill="#f4f6fb" stroke="#8a9cc4" stroke-width=".8"/><path d="M2 4h5M2 6h5M2 8h5" stroke="#a9b6d6" stroke-width=".9"/><path d="M8.500 5.500h7l2.500 2.500v9h-9.500z" fill="#f4f6fb" stroke="#3d56b0" stroke-width="1"/><path d="M10 9.500h6M10 11.500h6M10 13.500h6M10 15.500h6" stroke="#5a74c4" stroke-width=".9"/></svg>
<svg class="a" style="left:241px;top:65px;" width="20" height="18" viewBox="0 0 20 18"><rect x="0.500" y="2" width="13" height="15" fill="url(#gFoldO)" stroke="#8a6a14" stroke-width=".8"/><path d="M4 3.500v-2h1.500a1.500 1.500 0 0 1 3 0h1.500v2z" fill="#d9c070" stroke="#6b5a2a" stroke-width=".7"/><path d="M7.500 9.500h7l4 4v4h-11z" fill="#eef0f4" stroke="#2a3246" stroke-width="1"/><path d="M9 12h5M9 14h7M9 16h7" stroke="#8a93a6" stroke-width=".9"/></svg>
<svg class="a" style="left:272px;top:65px;" width="12" height="17" viewBox="0 0 12 17"><path d="M2.500 0.500l5 10M9.500 0.500l-5 10" stroke="#8fa0c0" stroke-width="1.800" fill="none"/><ellipse cx="3" cy="13.500" rx="2.200" ry="2.800" fill="none" stroke="#7f90b4" stroke-width="1.600"/><ellipse cx="9" cy="13.500" rx="2.200" ry="2.800" fill="none" stroke="#7f90b4" stroke-width="1.600"/></svg>
<svg class="a" style="left:296px;top:64px;" width="20" height="20" viewBox="0 0 20 20"><path d="M5 7l2.500-6h9l-2.500 6z" fill="#eef0f6" stroke="#7a84a0" stroke-width=".7"/><path d="M7 3h7M6.300 5h7" stroke="#b9a0c8" stroke-width=".7"/><path d="M1 8h16l1.500 1.500v6h-18z" fill="#e6e9f0" stroke="#4a5a84" stroke-width=".9"/><rect x="0.500" y="13" width="18" height="3.500" fill="#6878a0"/><rect x="2" y="9.500" width="14" height="1.200" fill="#fff"/><rect x="11" y="10.500" width="5" height="4.500" fill="#22b034"/><rect x="12.500" y="11.500" width="2" height="2" fill="#7be87a"/></svg>
<svg class="a" style="left:324px;top:64px;" width="20" height="20" viewBox="0 0 20 20"><path d="M5 7l2.500-6h9l-2.500 6z" fill="#eef0f6" stroke="#7a84a0" stroke-width=".7"/><path d="M7 3h7M6.300 5h7" stroke="#b9a0c8" stroke-width=".7"/><path d="M1 8h16l1.500 1.500v6h-18z" fill="#e6e9f0" stroke="#4a5a84" stroke-width=".9"/><rect x="0.500" y="13" width="18" height="3.500" fill="#6878a0"/><rect x="2" y="9.500" width="14" height="1.200" fill="#fff"/><path d="M15 7.500l-4 5h3l-3 6.500l7.500-8h-3l3-3.500z" fill="#f4d848" stroke="#c89a18" stroke-width=".5"/></svg>
<svg class="a" style="left:354px;top:65px;" width="19" height="19" viewBox="0 0 19 19"><path d="M2 2h9l3 3v12h-12z" fill="#5a6684"/><path d="M0.500 0.500h8.500l3.500 3.500v12.500h-12z" fill="#fbfbfd" stroke="#c8ccd8" stroke-width=".5"/><circle cx="9.500" cy="9" r="4.200" fill="#dfe4e6" stroke="#3a3a3a" stroke-width="1.300"/><path d="M12.500 12.500l5 5.500" stroke="#d68a2a" stroke-width="2.600"/></svg>
<svg class="a" style="left:381px;top:64px;" width="19" height="18" viewBox="0 0 19 18"><path d="M0.500 7l9-6.500l9 6.500z" fill="#f6c25a" stroke="#e09a2a" stroke-width=".5"/><path d="M3 7l6.500-4l6.500 4v3h-13z" fill="#fff6d8"/><path d="M0.500 7v10.500h18v-10.500l-9 5.500z" fill="url(#gEnv)" stroke="#3f7ad0" stroke-width=".8"/><path d="M0.500 17.500l7-6.500M18.500 17.500l-7-6.500" stroke="#fff" stroke-width=".9" opacity=".9"/></svg>
<svg class="a" style="left:409px;top:65px;" width="20" height="18" viewBox="0 0 20 18"><path d="M0.500 0.500h16v16h-14l-2-2z" fill="#5048d8" stroke="#3a34a8" stroke-width=".8"/><rect x="4" y="1" width="9" height="7" fill="#f4f4fb"/><path d="M5 3h7" stroke="#b0a8e0" stroke-width="1"/><rect x="5" y="11" width="8" height="5.500" fill="#e8e8f4"/><rect x="6" y="12" width="2.500" height="3.500" fill="#1a1a3a"/><path d="M8 5l10 11.500" stroke="#c8c05a" stroke-width="2.600"/><path d="M16.500 14.800l2 2.400" stroke="#d8505a" stroke-width="2.600"/><path d="M6.800 3.500l2 2.200" stroke="#333" stroke-width="1.500"/></svg>
<div class="a" style="left:435px;top:64px;width:1px;height:21px;background:#8fa6cf"></div><div class="a" style="left:436px;top:64px;width:1px;height:21px;background:#dce8fa"></div>
<svg class="a" style="left:442px;top:65px;" width="20" height="18" viewBox="0 0 20 18"><path d="M0.500 4.500l4.500-3.800v2.500h4v2.600h-4v2.500z" fill="#3f6fd8"/><text x="9" y="8.500" font-family="Liberation Sans,sans-serif" font-weight="bold" font-size="11.500" fill="#1c2a54">.0</text><text x="3" y="17.500" font-family="Liberation Sans,sans-serif" font-weight="bold" font-size="11.500" fill="#1c2a54">.00</text></svg>
<div class="a" style="left:469px;top:64px;width:1px;height:21px;background:#8fa6cf"></div><div class="a" style="left:470px;top:64px;width:1px;height:21px;background:#dce8fa"></div>
<svg class="a" style="left:477px;top:64px;" width="20" height="18" viewBox="0 0 20 18"><rect x="0.5" y="0.5" width="7.500" height="7" fill="#fbfdf6" stroke="#b9c0b0" stroke-width=".6"/><rect x="0.5" y="0.5" width="7.500" height="1.600" fill="#c8d8b0"/><rect x="11.5" y="0.5" width="7.500" height="7" fill="#fbfdf6" stroke="#b9c0b0" stroke-width=".6"/><rect x="11.5" y="0.5" width="7.500" height="1.600" fill="#c8d8b0"/><rect x="0.5" y="10.5" width="7.500" height="7" fill="#fbfdf6" stroke="#b9c0b0" stroke-width=".6"/><rect x="0.5" y="10.5" width="7.500" height="1.600" fill="#c8d8b0"/><rect x="6.500" y="6" width="7.500" height="8" fill="#eef4ff" stroke="#2a48b8" stroke-width="1"/><rect x="6.500" y="6" width="7.500" height="2.200" fill="#3a5ad0"/></svg>
<svg class="a" style="left:501px;top:71px;" width="8" height="5" viewBox="0 0 8 5"><path d="M0.500 0.500h6l-3 3.500z" fill="#5577b0"/></svg>
<svg class="a" style="left:522px;top:71px;" width="8" height="9" viewBox="0 0 8 9"><path d="M0.500 1h7" stroke="#1f3a6e" stroke-width="1.400"/><path d="M0.500 4h7l-3.500 4z" fill="#1f3a6e"/></svg>
<svg class="a" style="left:225px;top:128px;" width="16" height="16" viewBox="0 0 16 16"><rect x="3" y="1" width="13" height="15" fill="#d4d0c8" opacity=".75"/><rect x="0" y="0" width="11.500" height="10.500" fill="#fff"/><rect x="0" y="0" width="11.500" height="3" fill="#000080"/><rect x="0" y="0" width="1.200" height="10.500" fill="#000080"/><path d="M2 1.500h1M4.500 1.500h1M7 1.500h1.500M9.500 1.500h1" stroke="#fff" stroke-width="1" opacity=".85"/><path d="M6 4.200h1.600l1 3.600h.9l1-3.600h1.600l2.200 7v2.600h-4.200v-2.200h-2.200v2.200h-4.200v-2.600z" fill="#000"/><path d="M8.300 9.300h1.500" stroke="#dcdcdc" stroke-width="1.100"/><path d="M4.500 11.500v2M12.500 11.500v2" stroke="#f6f06a" stroke-width="1"/><path d="M7.800 12.500h1.800" stroke="#8a8a2a" stroke-width="1.400"/><path d="M6.300 6.500l-.8 3M11.700 6.500l.8 3" stroke="#bbb" stroke-width=".6"/></svg>
<svg class="a" style="left:225px;top:159px;" width="16" height="16" viewBox="0 0 16 16"><rect x="3" y="1" width="13" height="15" fill="#d4d0c8" opacity=".75"/><rect x="0" y="0" width="11.500" height="10.500" fill="#fff"/><rect x="0" y="0" width="11.500" height="3" fill="#000080"/><rect x="0" y="0" width="1.200" height="10.500" fill="#000080"/><path d="M2 1.500h1M4.500 1.500h1M7 1.500h1.500M9.500 1.500h1" stroke="#fff" stroke-width="1" opacity=".85"/><path d="M6 4.200h1.600l1 3.600h.9l1-3.600h1.600l2.200 7v2.600h-4.200v-2.200h-2.200v2.200h-4.200v-2.600z" fill="#000"/><path d="M8.300 9.300h1.500" stroke="#dcdcdc" stroke-width="1.100"/><path d="M4.500 11.500v2M12.500 11.500v2" stroke="#f6f06a" stroke-width="1"/><path d="M7.800 12.500h1.800" stroke="#8a8a2a" stroke-width="1.400"/><path d="M6.300 6.500l-.8 3M11.700 6.500l.8 3" stroke="#bbb" stroke-width=".6"/></svg>
<svg class="a" style="left:698px;top:150px;" width="16" height="16" viewBox="0 0 16 16"><rect x="3" y="1" width="13" height="15" fill="#d4d0c8" opacity=".75"/><rect x="0" y="0" width="11.500" height="10.500" fill="#fff"/><rect x="0" y="0" width="11.500" height="3" fill="#000080"/><rect x="0" y="0" width="1.200" height="10.500" fill="#000080"/><path d="M2 1.500h1M4.500 1.500h1M7 1.500h1.500M9.500 1.500h1" stroke="#fff" stroke-width="1" opacity=".85"/><path d="M6 4.200h1.600l1 3.600h.9l1-3.600h1.600l2.200 7v2.600h-4.200v-2.200h-2.200v2.200h-4.200v-2.600z" fill="#000"/><path d="M8.300 9.300h1.500" stroke="#dcdcdc" stroke-width="1.100"/><path d="M4.500 11.500v2M12.500 11.500v2" stroke="#f6f06a" stroke-width="1"/><path d="M7.800 12.500h1.800" stroke="#8a8a2a" stroke-width="1.400"/><path d="M6.300 6.500l-.8 3M11.700 6.500l.8 3" stroke="#bbb" stroke-width=".6"/></svg>
<svg class="a" style="left:743px;top:150px;" width="16" height="16" viewBox="0 0 16 16"><rect x="3" y="1" width="13" height="15" fill="#d4d0c8" opacity=".75"/><rect x="0" y="0" width="11.500" height="10.500" fill="#fff"/><rect x="0" y="0" width="11.500" height="3" fill="#e01818"/><rect x="0" y="0" width="1.200" height="10.500" fill="#e01818"/><path d="M2 1.500h1M4.500 1.500h1M7 1.500h1.500M9.500 1.500h1" stroke="#fff" stroke-width="1" opacity=".85"/><path d="M6 4.200h1.600l1 3.600h.9l1-3.600h1.600l2.200 7v2.600h-4.200v-2.200h-2.200v2.200h-4.200v-2.600z" fill="#000"/><path d="M8.300 9.300h1.500" stroke="#dcdcdc" stroke-width="1.100"/><path d="M4.500 11.500v2M12.500 11.500v2" stroke="#f6f06a" stroke-width="1"/><path d="M7.800 12.500h1.800" stroke="#8a8a2a" stroke-width="1.400"/><path d="M6.300 6.500l-.8 3M11.700 6.500l.8 3" stroke="#bbb" stroke-width=".6"/></svg>
<div class="a" style="left:21px;top:961px;width:2px;height:26px;background:repeating-linear-gradient(#b4b4b4 0,#b4b4b4 2px,transparent 2px,transparent 4px)"></div>
<svg class="a" style="left:31px;top:967px;" width="14" height="15" viewBox="0 0 14 15"><rect x="0.500" y="0.500" width="3" height="14" fill="url(#gNav)"/><path d="M13 0.500v14l-9-7z" fill="url(#gNav)"/></svg>
<svg class="a" style="left:59px;top:967px;" width="9" height="15" viewBox="0 0 9 15"><path d="M8.500 0.500v14l-8-7z" fill="url(#gNav)"/></svg>
<div class="a" style="left:78px;top:961px;width:1px;height:26px;background:#c4c4c4"></div><div class="a" style="left:79px;top:961px;width:1px;height:26px;background:#fff"></div>
<div class="a" style="left:189px;top:961px;width:1px;height:26px;background:#c4c4c4"></div><div class="a" style="left:190px;top:961px;width:1px;height:26px;background:#fff"></div>
<svg class="a" style="left:198px;top:967px;" width="9" height="15" viewBox="0 0 9 15"><path d="M0.500 0.500v14l8-7z" fill="url(#gNavR)"/></svg>
<svg class="a" style="left:221px;top:967px;" width="14" height="15" viewBox="0 0 14 15"><rect x="10.500" y="0.500" width="3" height="14" fill="url(#gNavR)"/><path d="M1 0.500v14l9-7z" fill="url(#gNavR)"/></svg>
<div class="a" style="left:243px;top:961px;width:1px;height:26px;background:#c4c4c4"></div><div class="a" style="left:244px;top:961px;width:1px;height:26px;background:#fff"></div>
<svg class="a" style="left:249px;top:966px;" width="18" height="15" viewBox="0 0 18 15"><path d="M0.500 0.500h17l-6.500 7v6.500h-4v-6.500z" fill="url(#gFun)"/><path d="M2.500 1.500h13" stroke="#777" stroke-width=".8"/></svg>
<div class="a" style="left:272px;top:961px;width:1px;height:26px;background:#c4c4c4"></div><div class="a" style="left:273px;top:961px;width:1px;height:26px;background:#fff"></div>
<div class="a" style="left:443px;top:961px;width:1px;height:26px;background:#c4c4c4"></div><div class="a" style="left:444px;top:961px;width:1px;height:26px;background:#fff"></div>
<div class="a" style="left:64px;top:1004px;width:1px;height:22px;background:#9bb6dc"></div><div class="a" style="left:65px;top:1004px;width:1px;height:22px;background:#e6f0fd"></div>
<div class="a" style="left:303px;top:1004px;width:1px;height:22px;background:#9bb6dc"></div><div class="a" style="left:304px;top:1004px;width:1px;height:22px;background:#e6f0fd"></div>
<div class="a" style="left:468px;top:1004px;width:1px;height:22px;background:#9bb6dc"></div><div class="a" style="left:469px;top:1004px;width:1px;height:22px;background:#e6f0fd"></div>
<div class="a" style="left:493px;top:1004px;width:1px;height:22px;background:#9bb6dc"></div><div class="a" style="left:494px;top:1004px;width:1px;height:22px;background:#e6f0fd"></div>
<div class="a" style="left:524px;top:1004px;width:1px;height:22px;background:#9bb6dc"></div><div class="a" style="left:525px;top:1004px;width:1px;height:22px;background:#e6f0fd"></div>
<div class="a" style="left:602px;top:1004px;width:1px;height:22px;background:#9bb6dc"></div><div class="a" style="left:603px;top:1004px;width:1px;height:22px;background:#e6f0fd"></div>
<svg class="a" style="left:499.5px;top:1004.5px;" width="18.5" height="20.5" viewBox="0 0 17 20"><path d="M2 0.500h11.500a3 3 0 0 1 3 3v13l-2.500 3h-9a3 3 0 0 1-3-3z" fill="#1f8fe6" stroke="#1670c8" stroke-width=".6"/><circle cx="8.300" cy="8.500" r="5.300" fill="#fff"/><path d="M3.800 8.500l3-2.300v1.500h3v-1.500l3 2.300l-3 2.300v-1.500h-3v1.500z" fill="#1f8fe6"/></svg>
<svg class="a" style="left:535px;top:1010px;" width="12" height="12" viewBox="0 0 12 12"><rect x="0.500" y="0.500" width="11" height="11" fill="url(#gGreen)" stroke="#e8f6e8" stroke-width=".6"/></svg>
<svg class="a" style="left:1871px;top:242px;" width="16" height="16" viewBox="0 0 16 16"><rect x="3" y="1" width="13" height="15" fill="#d4d0c8" opacity=".75"/><rect x="0" y="0" width="11.500" height="10.500" fill="#fff"/><rect x="0" y="0" width="11.500" height="3" fill="#e01818"/><rect x="0" y="0" width="1.200" height="10.500" fill="#e01818"/><path d="M2 1.500h1M4.500 1.500h1M7 1.500h1.500M9.500 1.500h1" stroke="#fff" stroke-width="1" opacity=".85"/><path d="M6 4.200h1.600l1 3.600h.9l1-3.600h1.600l2.200 7v2.600h-4.200v-2.200h-2.200v2.200h-4.200v-2.600z" fill="#000"/><path d="M8.300 9.300h1.500" stroke="#dcdcdc" stroke-width="1.100"/><path d="M4.500 11.500v2M12.500 11.500v2" stroke="#f6f06a" stroke-width="1"/><path d="M7.800 12.500h1.800" stroke="#8a8a2a" stroke-width="1.400"/><path d="M6.300 6.500l-.8 3M11.700 6.500l.8 3" stroke="#bbb" stroke-width=".6"/></svg>
<svg class="a" style="left:1871px;top:260px;" width="16" height="16" viewBox="0 0 16 16"><rect x="3" y="1" width="13" height="15" fill="#d4d0c8" opacity=".75"/><rect x="0" y="0" width="11.500" height="10.500" fill="#fff"/><rect x="0" y="0" width="11.500" height="3" fill="#e01818"/><rect x="0" y="0" width="1.200" height="10.500" fill="#e01818"/><path d="M2 1.500h1M4.500 1.500h1M7 1.500h1.500M9.500 1.500h1" stroke="#fff" stroke-width="1" opacity=".85"/><path d="M6 4.200h1.600l1 3.600h.9l1-3.600h1.600l2.200 7v2.600h-4.200v-2.200h-2.200v2.200h-4.200v-2.600z" fill="#000"/><path d="M8.300 9.300h1.500" stroke="#dcdcdc" stroke-width="1.100"/><path d="M4.500 11.500v2M12.500 11.500v2" stroke="#f6f06a" stroke-width="1"/><path d="M7.800 12.500h1.800" stroke="#8a8a2a" stroke-width="1.400"/><path d="M6.300 6.500l-.8 3M11.700 6.500l.8 3" stroke="#bbb" stroke-width=".6"/></svg>
<svg class="a" style="left:1871px;top:278px;" width="16" height="16" viewBox="0 0 16 16"><rect x="3" y="1" width="13" height="15" fill="#d4d0c8" opacity=".75"/><rect x="0" y="0" width="11.500" height="10.500" fill="#fff"/><rect x="0" y="0" width="11.500" height="3" fill="#e01818"/><rect x="0" y="0" width="1.200" height="10.500" fill="#e01818"/><path d="M2 1.500h1M4.500 1.500h1M7 1.500h1.500M9.500 1.500h1" stroke="#fff" stroke-width="1" opacity=".85"/><path d="M6 4.200h1.600l1 3.600h.9l1-3.600h1.600l2.200 7v2.600h-4.200v-2.200h-2.200v2.200h-4.200v-2.600z" fill="#000"/><path d="M8.300 9.300h1.500" stroke="#dcdcdc" stroke-width="1.100"/><path d="M4.500 11.500v2M12.500 11.500v2" stroke="#f6f06a" stroke-width="1"/><path d="M7.800 12.500h1.800" stroke="#8a8a2a" stroke-width="1.400"/><path d="M6.300 6.500l-.8 3M11.700 6.500l.8 3" stroke="#bbb" stroke-width=".6"/></svg>
<div class="a" style="left:1251px;top:311px;width:2px;height:24px;background:repeating-linear-gradient(#b4b4b4 0,#b4b4b4 2px,transparent 2px,transparent 4px)"></div>
<svg class="a" style="left:1262px;top:316px;" width="14" height="15" viewBox="0 0 14 15"><rect x="0.500" y="0.500" width="3" height="14" fill="url(#gNav)"/><path d="M13 0.500v14l-9-7z" fill="url(#gNav)"/></svg>
<svg class="a" style="left:1290px;top:316px;" width="9" height="15" viewBox="0 0 9 15"><path d="M8.500 0.500v14l-8-7z" fill="url(#gNav)"/></svg>
<div class="a" style="left:1309px;top:311px;width:1px;height:24px;background:#c4c4c4"></div><div class="a" style="left:1310px;top:311px;width:1px;height:24px;background:#fff"></div>
<div class="a" style="left:1420px;top:311px;width:1px;height:24px;background:#c4c4c4"></div><div class="a" style="left:1421px;top:311px;width:1px;height:24px;background:#fff"></div>
<svg class="a" style="left:1428px;top:316px;" width="9" height="15" viewBox="0 0 9 15"><path d="M0.500 0.500v14l8-7z" fill="#a9a9a9"/></svg>
<svg class="a" style="left:1451px;top:316px;" width="14" height="15" viewBox="0 0 14 15"><rect x="10.500" y="0.500" width="3" height="14" fill="#a9a9a9"/><path d="M1 0.500v14l9-7z" fill="#a9a9a9"/></svg>
<svg class="a" style="left:1255px;top:374px;" width="19" height="19" viewBox="0 0 19 19"><circle cx="9.500" cy="9.500" r="7.600" fill="none" stroke="#b3b3b3" stroke-width="2.800"/><path d="M3.800 9.500l5.200-4.800v3.100h5.800v3.400h-5.800v3.100z" fill="#b3b3b3"/></svg>
<svg class="a" style="left:1284px;top:374px;" width="19" height="19" viewBox="0 0 19 19"><circle cx="9.500" cy="9.500" r="7.600" fill="none" stroke="#b3b3b3" stroke-width="2.800"/><path d="M15.200 9.500l-5.200-4.800v3.100h-5.800v3.400h5.800v3.100z" fill="#b3b3b3"/></svg>
<div class="a" style="left:1311.500px;top:372.500px;font-size:18.500px;line-height:22px;color:#4a4a4a;-webkit-text-stroke:.5px #4a4a4a">A</div>
<svg class="a" style="left:1325px;top:372px;" width="6" height="20" viewBox="0 0 6 20"><path d="M0.500 0.800h5M0.500 19.200h5M3 0.800v18.400" stroke="#3b74c4" stroke-width="1.600" fill="none"/></svg>
<svg class="a" style="left:1345px;top:379px;" width="10" height="9" viewBox="0 0 10 9"><path d="M0.500 1h9" stroke="#555" stroke-width="1.400"/><path d="M1 4h8l-4 4z" fill="#555"/></svg>
<svg class="a" style="left:1408px;top:373px;" width="16" height="19" viewBox="0 0 16 19"><path d="M0.800 0.800h9.700l4.700 4.700v12.700h-14.400z" fill="#fff" stroke="#5b6478" stroke-width="1.400"/><path d="M10.500 0.800v4.700h4.700" fill="none" stroke="#5b6478" stroke-width="1.200"/><path d="M3.500 7.500h9M3.500 10h9M3.500 12.500h9M3.500 15h9" stroke="#8a92a4" stroke-width="1"/></svg>
<svg class="a" style="left:1437px;top:377px;" width="16" height="12" viewBox="0 0 16 12"><rect x="0" y="0" width="8.500" height="7" fill="#b9b9b9"/><rect x="6" y="4" width="10" height="8" fill="#9c9c9c" stroke="#f3f3f3" stroke-width=".8"/></svg>
<svg class="a" style="left:1463px;top:373px;" width="20" height="19" viewBox="0 0 20 19"><rect x="0.700" y="0.700" width="18.600" height="17.600" fill="#fff" stroke="#6a6a6a" stroke-width="1.400"/><rect x="12" y="0.700" width="7.300" height="17.600" fill="#dcdcdc" stroke="#6a6a6a" stroke-width="1.200"/><path d="M15.600 3.500v2.500M15.600 8v2.500M15.600 12.500v2.500" stroke="#8a8a8a" stroke-width="1.600"/></svg>
<svg class="a" style="left:1490px;top:373px;" width="21" height="19" viewBox="0 0 21 19"><rect x="0.800" y="0.800" width="19.400" height="17.400" fill="#fff" stroke="#444c5a" stroke-width="1.600"/><path d="M10.500 1v17M1 9.500h19" stroke="#444c5a" stroke-width="1.400"/><rect x="3.5" y="3" width="5" height="4" fill="#3d79c8"/><rect x="3.5" y="11.5" width="5" height="4" fill="#3d79c8"/><rect x="12.5" y="3" width="5" height="4" fill="#3d79c8"/><rect x="12.5" y="11.5" width="5" height="4" fill="#3d79c8"/></svg>
<div class="a" style="left:1519px;top:371px;width:1px;height:24px;background:#dadada"></div><div class="a" style="left:1520px;top:371px;width:1px;height:24px;background:#fbfbfb"></div>
<svg class="a" style="left:1531px;top:375px;" width="14" height="16" viewBox="0 0 14 16"><rect x="0.500" y="0.500" width="3" height="15" fill="#b3b3b3"/><path d="M13.500 0.500v15l-9.500-7.500z" fill="#b3b3b3"/></svg>
<svg class="a" style="left:1560.5px;top:375px;" width="10" height="16" viewBox="0 0 10 16"><path d="M10 0.500v15l-9.500-7.500z" fill="#b3b3b3"/></svg>
<svg class="a" style="left:1735px;top:375px;" width="10" height="16" viewBox="0 0 10 16"><path d="M0 0.500v15l9.500-7.500z" fill="#b3b3b3"/></svg>
<svg class="a" style="left:1761px;top:375px;" width="14" height="16" viewBox="0 0 14 16"><rect x="10.500" y="0.500" width="3" height="15" fill="#b3b3b3"/><path d="M0.500 0.500v15l9.500-7.500z" fill="#b3b3b3"/></svg>
<div class="a" style="left:1786px;top:371px;width:1px;height:24px;background:#dadada"></div><div class="a" style="left:1787px;top:371px;width:1px;height:24px;background:#fbfbfb"></div>
<svg class="a" style="left:1795px;top:373px;" width="20" height="19" viewBox="0 0 20 19"><rect x="4" y="0.500" width="12" height="6" fill="#fff" stroke="#3d7ac4" stroke-width="1.400"/><rect x="0" y="5" width="20" height="9" rx="1" fill="#3d7ac4"/><rect x="4.500" y="10.500" width="11" height="8" fill="#fff" stroke="#777" stroke-width="1"/><path d="M6.500 13.500h7M6.500 16h7" stroke="#aaa" stroke-width=".9"/></svg>
<svg class="a" style="left:1826px;top:373px;" width="18" height="19" viewBox="0 0 18 19"><path d="M0.800 0.800h8.700l4.700 4.700v12.700h-13.400z" fill="#fff" stroke="#555" stroke-width="1.400"/><path d="M9.500 0.800v4.700h4.700" fill="none" stroke="#555" stroke-width="1.200"/><path d="M8 18.500l5-6l4.500 6z" fill="#4aa37a"/></svg>
<svg class="a" style="left:1851px;top:372px;" width="20" height="21" viewBox="0 0 20 21"><path d="M5.800 1.800h8.700l4.700 4.700v12.700h-13.400z" fill="#fff" stroke="#555" stroke-width="1.400"/><path d="M14.500 1.800v4.700h4.700" fill="none" stroke="#555" stroke-width="1.200"/><circle cx="10.500" cy="9" r="4.600" fill="#e8f0fb" stroke="#2f6fc4" stroke-width="1.600"/><path d="M7 12.500l-6 6.500" stroke="#2f6fc4" stroke-width="2"/></svg>
<svg class="a" style="left:1882px;top:378px;" width="13" height="9" viewBox="0 0 13 9"><path d="M1 1.500l5.500 5.500l5.500-5.500" fill="none" stroke="#333" stroke-width="2.200"/></svg>
<svg class="a" style="left:1508px;top:969px;" width="18" height="18" viewBox="0 0 18 18"><path d="M2.500 8a6.500 5.500 0 0 1 12.500-2" fill="none" stroke="#fff" stroke-width="3"/><path d="M0 1.500l6.500 1.500l-5 5.500z" fill="#fff"/><path d="M10 8l5 5l-5 5l-5-5z" fill="#fff"/></svg>
<svg class="a" style="left:1537px;top:969px;" width="18" height="18" viewBox="0 0 18 18"><path d="M15.500 8a6.500 5.500 0 0 0-12.500-2" fill="none" stroke="#fff" stroke-width="3"/><path d="M18 1.500l-6.500 1.500l5 5.500z" fill="#fff"/><path d="M8 8l-5 5l5 5l5-5z" fill="#fff"/></svg>
<div class="a" style="left:1560px;top:967px;width:5px;height:23px;background:#d9d9d9"></div>
<div class="a" style="left:1678px;top:967px;width:5px;height:23px;background:#d9d9d9"></div>
<div class="a" style="left:1594px;top:965px;width:28px;height:27px;background:#143572"></div>
<svg class="a" style="left:1570px;top:969px;" width="20" height="20" viewBox="0 0 20 20"><rect x="0.500" y="0.500" width="19" height="19" fill="none" stroke="#6f88b8"/><rect x="4.500" y="3" width="11" height="14" fill="#fff"/></svg>
<svg class="a" style="left:1598px;top:969px;" width="20" height="20" viewBox="0 0 20 20"><rect x="0.500" y="0.500" width="19" height="19" fill="none" stroke="#6f88b8"/><rect x="4" y="0" width="12" height="7.500" fill="#fff"/><rect x="4" y="11.500" width="12" height="8.500" fill="#fff"/></svg>
<svg class="a" style="left:1626px;top:969px;" width="20" height="20" viewBox="0 0 20 20"><rect x="0.500" y="0.500" width="19" height="19" fill="none" stroke="#6f88b8"/><rect x="3" y="4" width="6" height="11" fill="#fff"/><rect x="11" y="4" width="6" height="11" fill="#fff"/></svg>
<svg class="a" style="left:1654px;top:969px;" width="20" height="20" viewBox="0 0 20 20"><rect x="0.500" y="0.500" width="19" height="19" fill="none" stroke="#6f88b8"/><rect x="3" y="2" width="6" height="6.500" fill="#fff"/><rect x="11" y="2" width="6" height="6.500" fill="#fff"/><rect x="3" y="11" width="6" height="6.500" fill="#fff"/><rect x="11" y="11" width="6" height="6.500" fill="#fff"/></svg>
<div class="a" style="left:1689px;top:978px;width:11px;height:2px;background:#fff"></div>
<div class="a" style="left:1705px;top:978px;width:119px;height:1px;background:#e6ecf6"></div>
<div class="a" style="left:1738px;top:970px;width:6px;height:17px;background:#e6e6e6"></div>
<div class="a" style="left:1829px;top:978px;width:12px;height:2px;background:#fff"></div><div class="a" style="left:1834px;top:973px;width:2px;height:12px;background:#fff"></div>
</body></html>
